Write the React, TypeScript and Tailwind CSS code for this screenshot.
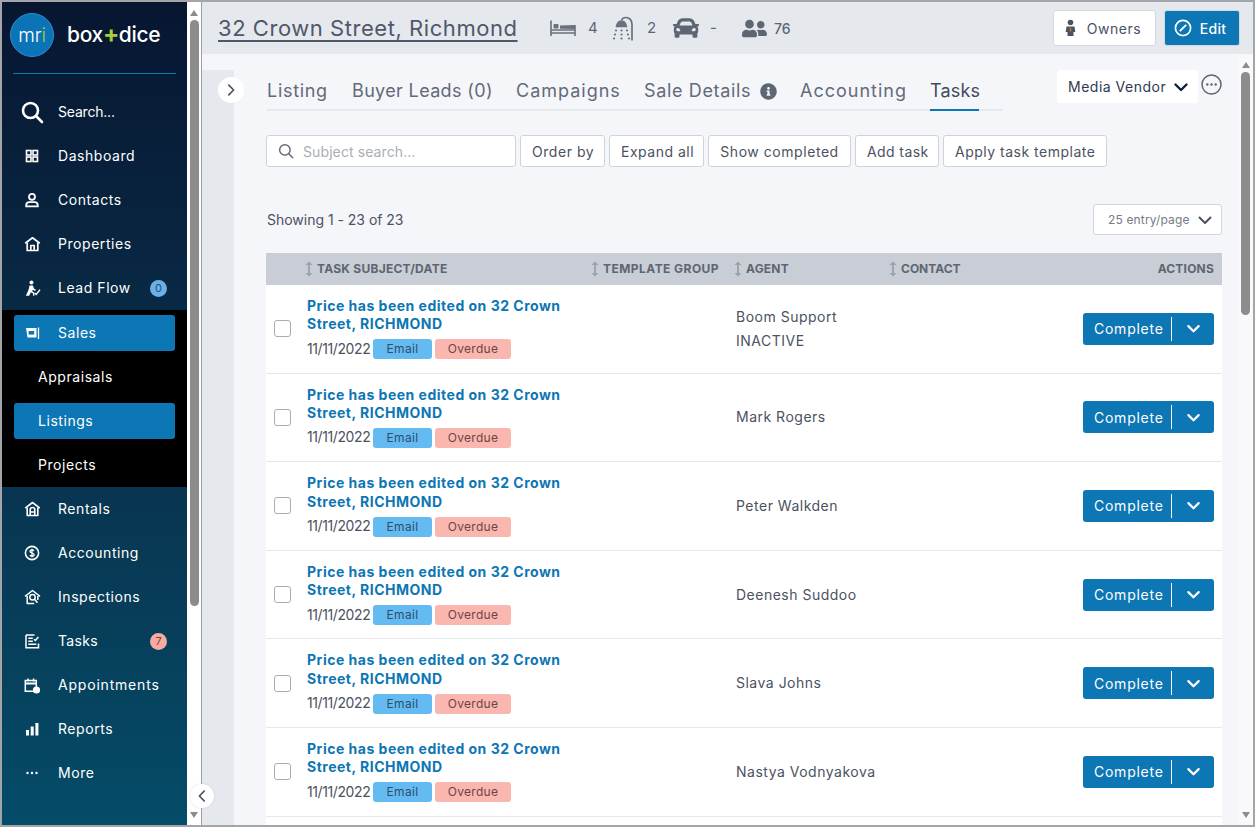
import React from "react";
import { FaCar, FaUserFriends, FaInfoCircle } from "react-icons/fa";

const S = ({ children, w = 20, vb = "0 0 24 24", className = "" }: { children: React.ReactNode; w?: number; vb?: string; className?: string }) => (
  <svg width={w} height={w} viewBox={vb} fill="none" stroke="currentColor" strokeWidth={2} strokeLinecap="round" strokeLinejoin="round" className={className}>{children}</svg>
);

const Chevron = ({ dir = "down", w = 16, sw = 2.4 }: { dir?: "down" | "left" | "right"; w?: number; sw?: number }) => (
  <svg width={w} height={w} viewBox="0 0 16 16" fill="none" stroke="currentColor" strokeWidth={sw} strokeLinecap="round" strokeLinejoin="round">
    {dir === "down" && <path d="M2.5 5.5 8 11l5.5-5.5" />}
    {dir === "left" && <path d="M10.5 2.5 5 8l5.5 5.5" />}
    {dir === "right" && <path d="M5.5 2.5 11 8l-5.5 5.5" />}
  </svg>
);

const icons: Record<string, React.ReactNode> = {
  dashboard: <svg width="14" height="14" viewBox="0 0 14 14" fill="none" stroke="currentColor" strokeWidth="1.6"><rect x="1.5" y="1.5" width="4.5" height="4.5" /><rect x="8" y="1.5" width="4.5" height="4.5" /><rect x="1.5" y="8" width="4.5" height="4.5" /><rect x="8" y="8" width="4.5" height="4.5" /></svg>,
  contacts: <svg width="16" height="16" viewBox="0 0 16 16" fill="none" stroke="currentColor" strokeWidth="1.8"><circle cx="8" cy="4.8" r="3" /><path d="M2.2 14.4v-1c0-2 1.6-3.2 3.3-3.2h5c1.7 0 3.3 1.2 3.3 3.2v1z" /></svg>,
  properties: <svg width="17" height="16" viewBox="0 0 17 16" fill="none" stroke="currentColor" strokeWidth="1.7" strokeLinejoin="round"><path d="M1.2 7.2 8.5 1.8l7.3 5.4" /><path d="M3.2 6.5v8h10.6v-8" /><path d="M6.8 14.5V9.5h3.4v5" /></svg>,
  lead: <svg width="17" height="17" viewBox="0 0 17 17" fill="currentColor"><circle cx="7.5" cy="2.6" r="2" /><path d="M5.5 5.4h3.4l1.2 3.4 1.8.8-.6 1.3-2.6-1.1-.4 1.4 2 1.6v3H9v-2.2l-2.2-1.4-1.6 3.6H1.8l2.6-5.6z" /><path d="m10.5 13 1.6 1.4L16 9.8" fill="none" stroke="currentColor" strokeWidth="1.4" /></svg>,
  sales: <svg width="15" height="14" viewBox="0 0 15 14" fill="none"><path d="M1 2h10.5v9.5H2.5L1 2z" fill="currentColor" /><rect x="3.6" y="5" width="5.6" height="3.6" fill="#0d76b4" /><path d="M13.5 1.5V13" stroke="currentColor" strokeWidth="1.3" /></svg>,
  rentals: <svg width="17" height="16" viewBox="0 0 17 16" fill="none" stroke="currentColor" strokeWidth="1.6" strokeLinejoin="round"><path d="M1.2 7.2 8.5 1.5l7.3 5.7" /><path d="M3.2 6.5v8h10.6v-8" /><path d="M6.2 14.5V8.8a2.3 2.3 0 0 1 4.6 0v5.7M6.2 11h4.6" /></svg>,
  accounting: <svg width="16" height="16" viewBox="0 0 16 16" fill="none" stroke="currentColor" strokeWidth="1.6"><circle cx="8" cy="8" r="6.6" /><path d="M10 5.8C9.5 5 8.8 4.8 8 4.8c-1.2 0-2 .6-2 1.5 0 2.2 4.1 1.2 4.1 3.4 0 .9-.9 1.5-2.1 1.5-.9 0-1.7-.3-2.1-1.1M8 3.8v8.4" strokeWidth="1.3" /></svg>,
  inspections: <svg width="17" height="16" viewBox="0 0 17 16" fill="none" stroke="currentColor" strokeWidth="1.5" strokeLinejoin="round"><path d="M1 7.4 8.5 1.5 16 7.4" /><path d="M3.2 7v7.5h7M13.8 7v4" /><circle cx="8.5" cy="8.3" r="2.7" /><path d="m10.5 10.3 3 3.4" /></svg>,
  tasks: <svg width="15" height="15" viewBox="0 0 15 15" fill="none" stroke="currentColor" strokeWidth="1.5"><path d="M1 1h8.5M1 1v12.8h12.5V9.5" /><path d="M3.3 4.3h4.5M3.3 7.2h4.5M3.3 10.2h8" /><path d="m9 5.2 1.4 1.3 3-3.4" /></svg>,
  appointments: <svg width="17" height="17" viewBox="0 0 17 17" fill="none"><path d="M1.3 3.5h11v10.7h-11z" stroke="currentColor" strokeWidth="1.5" /><path d="M1.3 6.5h11" stroke="currentColor" strokeWidth="2" /><path d="M4 1.5v3M9.6 1.5v3" stroke="currentColor" strokeWidth="1.5" /><circle cx="12.5" cy="13" r="3.6" fill="currentColor" /></svg>,
  reports: <svg width="14" height="14" viewBox="0 0 14 14" fill="currentColor"><rect x="1" y="8" width="3" height="5.5" /><rect x="5.7" y="4.5" width="3" height="9" /><rect x="10.4" y="1" width="3" height="12.5" /></svg>,
  more: <svg width="14" height="14" viewBox="0 0 14 14" fill="currentColor"><circle cx="2.5" cy="7" r="1.2" /><circle cx="7" cy="7" r="1.2" /><circle cx="11.5" cy="7" r="1.2" /></svg>,
};

const NavItem = ({ icon, label, tracking, badge, badgeClass }: { icon: React.ReactNode; label: string; tracking: string; badge?: string; badgeClass?: string }) => (
  <div className="h-11 flex items-center text-white text-[14px] relative">
    <div className="w-[56px] flex justify-center pl-[4px]">{icon}</div>
    <span className={`${tracking} mb-[2px]`}>{label}</span>
    {badge && <span className={`ml-auto mr-[20px] w-[17px] h-[17px] rounded-full flex items-center justify-center text-[11px] ${badgeClass}`}>{badge}</span>}
  </div>
);

const Sort = () => (
  <svg width="8" height="16" viewBox="0 0 8 16" className="shrink-0 text-[#9aa1ad]" fill="currentColor">
    <path d="M4 0.5 7.5 4h-2.6v8h2.6L4 15.5.5 12h2.6V4H.5z" />
  </svg>
);

const Btn = ({ children, cls = "" }: { children: React.ReactNode; cls?: string }) => (
  <button className={`h-8 px-[11px] bg-white border border-[#cfd3da] rounded-[3px] text-[14px] text-[#4b5261] whitespace-nowrap ${cls}`}>{children}</button>
);

const Scroll = ({ w, thumbTop, thumbH, thumbW, bg }: { w: string; thumbTop: string; thumbH: string; thumbW: string; bg: string }) => (
  <div className={`${w} ${bg} shrink-0 h-full flex flex-col items-center`}>
    <div className={`${thumbTop} flex items-end justify-center`}>
      <div className="w-0 h-0 border-l-[4.5px] border-r-[4.5px] border-b-[6px] border-l-transparent border-r-transparent border-b-[#8c8c8c] mb-[4px]" />
    </div>
    <div className={`${thumbW} ${thumbH} bg-[#8c8c8c] rounded-full`} />
    <div className="flex-1 flex items-end pb-[7px]">
      <div className="w-0 h-0 border-l-[4.5px] border-r-[4.5px] border-t-[6px] border-l-transparent border-r-transparent border-t-[#8c8c8c]" />
    </div>
  </div>
);

const rows: { agent: string; extra?: string }[] = [
  { agent: "Boom Support", extra: "INACTIVE" },
  { agent: "Mark Rogers" },
  { agent: "Peter Walkden" },
  { agent: "Deenesh Suddoo" },
  { agent: "Slava Johns" },
  { agent: "Nastya Vodnyakova" },
];

const grid = "grid grid-cols-[36px_288px_143px_155px_180px_1fr]";

export default function App() {
  return (
    <div className="w-[1255px] h-[827px] overflow-hidden bg-[#a3a5a8] pt-[2px] pb-[2px] pl-[2px] pr-[2px] flex font-['Inter','Liberation_Sans',sans-serif]">
      {/* Sidebar */}
      <aside className="w-[185px] shrink-0 h-full bg-gradient-to-b from-[#071631] to-[#044c68] flex flex-col">
        <div className="h-[72px] mx-[11px] border-b border-[#0d76b4] flex items-start pt-[11px] shrink-0">
          <div className="w-11 h-11 rounded-full bg-[#0b74b6] border border-[#2a8fd0] -ml-[3px] flex items-center justify-center text-white text-[19px] font-light leading-none tracking-[-0.2px] shrink-0">
            m<span>r</span><span className="text-[#a6cf38]">i</span>
          </div>
          <div className="ml-[13px] mt-[9px] text-white text-[21px] leading-[26px] font-medium tracking-[-0.35px] whitespace-nowrap">
            box<span className="text-[#a6cf38] font-bold text-[24px] leading-[20px]">+</span>dice
          </div>
        </div>
        <div className="pt-[16px]">
          <NavItem tracking="tracking-[-0.2px]" label="Search..." icon={<S w={24}><circle cx="10.5" cy="10.5" r="7.5" strokeWidth="2.6" /><path d="m16 16 6 6" strokeWidth="2.6" /></S>} />
          <NavItem tracking="tracking-[0.55px]" label="Dashboard" icon={icons.dashboard} />
          <NavItem tracking="tracking-[0.55px]" label="Contacts" icon={icons.contacts} />
          <NavItem tracking="tracking-[0.55px]" label="Properties" icon={icons.properties} />
          <NavItem tracking="tracking-[0.55px]" label="Lead Flow" icon={icons.lead} badge="0" badgeClass="bg-[#69b1e8] text-[#27506f]" />
        </div>
        <div className="bg-black h-[177px] pt-px shrink-0 text-white text-[14px]">
          <div className="h-11 py-[4px] px-[12px]">
            <div className="h-9 rounded-[3px] bg-[#0d76b4] flex items-center">
              <div className="w-[44px] pr-[8px] flex justify-center">{icons.sales}</div>
              <span className="tracking-[0.55px] mb-[2px]">Sales</span>
            </div>
          </div>
          <div className="h-11 flex items-center pl-[36px]"><span className="tracking-[0.55px] mb-[2px]">Appraisals</span></div>
          <div className="h-11 py-[4px] px-[12px]">
            <div className="h-9 rounded-[3px] bg-[#0d76b4] flex items-center pl-[24px]"><span className="tracking-[0.55px] mb-[2px]">Listings</span></div>
          </div>
          <div className="h-11 flex items-center pl-[36px]"><span className="tracking-[0.55px] mb-[2px]">Projects</span></div>
        </div>
        <div>
          <NavItem tracking="tracking-[0.55px]" label="Rentals" icon={icons.rentals} />
          <NavItem tracking="tracking-[0.55px]" label="Accounting" icon={icons.accounting} />
          <NavItem tracking="tracking-[0.55px]" label="Inspections" icon={icons.inspections} />
          <NavItem tracking="tracking-[0.3px]" label="Tasks" icon={icons.tasks} badge="7" badgeClass="bg-[#f7aba3] text-[#7a3e3a]" />
          <NavItem tracking="tracking-[0.8px]" label="Appointments" icon={icons.appointments} />
          <NavItem tracking="tracking-[0.55px]" label="Reports" icon={icons.reports} />
          <NavItem tracking="tracking-[0.55px]" label="More" icon={icons.more} />
        </div>
      </aside>

      {/* Sidebar gutter */}
      <div className="w-[14px] shrink-0 h-full bg-white relative">
        <Scroll w="w-[14px]" bg="bg-white" thumbTop="h-[18px]" thumbH="h-[586px]" thumbW="w-[9px]" />
      </div>
      <div className="w-px shrink-0 h-full bg-[#9b9ea3]" />

      {/* Main */}
      <main className="flex-1 min-w-0 h-full flex flex-col bg-[#f5f6fa] relative">
        <header className="h-[52px] shrink-0 bg-[#e5e8ed] flex items-center pl-[16px] pr-[13px] text-[#5f6673]">
          <h1 className="text-[22px] underline underline-offset-[4px] decoration-[1.5px] tracking-[0.55px] text-[#50576a] whitespace-nowrap w-[300px]">32 Crown Street, Richmond</h1>
          <svg width="26" height="18" viewBox="0 0 26 18" className="ml-[32px] text-[#6a707c]" fill="none" stroke="currentColor" strokeWidth="1.6">
            <path d="M1 1.5V17M25 6v11M1 14h24M1 11h24" />
            <rect x="3.5" y="5" width="5" height="4.5" rx="1" fill="currentColor" stroke="none" />
            <path d="M10 9.8V6.5l15-.5v4" fill="currentColor" stroke="none" />
          </svg>
          <span className="ml-[12px] w-[12px] text-[15px]">4</span>
          <svg width="23" height="25" viewBox="0 0 23 25" className="ml-[11px] text-[#6a707c]" fill="currentColor">
            <path d="M21 24.5V8.5C21 4 18.5 1.5 15 1.5c-2.2 0-3.8 1-4.5 2.8" fill="none" stroke="currentColor" strokeWidth="1.7" />
            <path d="M10.5 4.2c-3.2 0-5.5 2.8-5.8 7h11.6c-.3-4.2-2.6-7-5.8-7z" />
            <circle cx="5" cy="14.5" r="1.1" /><circle cx="10.5" cy="14.5" r="1.1" /><circle cx="16" cy="14.5" r="1.1" />
            <circle cx="4" cy="18.5" r="1.1" /><circle cx="10.5" cy="18.5" r="1.1" /><circle cx="17" cy="18.5" r="1.1" />
            <circle cx="3" cy="22.5" r="1.1" /><circle cx="10.5" cy="22.5" r="1.1" /><circle cx="18" cy="22.5" r="1.1" />
          </svg>
          <span className="ml-[13px] w-[12px] text-[15px]">2</span>
          <FaCar size={26} className="ml-[14px] text-[#5f6673]" />
          <span className="ml-[11px] w-[8px] text-[15px]">-</span>
          <FaUserFriends size={25} className="ml-[24px] text-[#5f6673]" />
          <span className="ml-[7px] mt-[1px] text-[14px] font-medium">76</span>
          <div className="ml-auto flex items-center gap-[8px]">
            <button className="h-[36px] w-[103px] bg-white border border-[#d5d8de] rounded-[3px] flex items-center justify-center gap-[11px] text-[14px] tracking-[0.55px] text-[#4b5261]">
              <svg width="11" height="18" viewBox="0 0 11 18" fill="#4b5261" className="-ml-[3px]"><circle cx="5.5" cy="3.5" r="2.8" /><path d="M1.5 7.4h8l.8 5.6H8.5v4h-6v-4H.7z" /><path d="M5.5 7.4 6.5 11l-1 2-1-2z" fill="#c77a2e" /></svg>
              Owners
            </button>
            <button className="h-[36px] w-[76px] bg-[#0d76b4] border border-[#d5d8de] rounded-[3px] flex items-center justify-center gap-[8px] text-[14px] tracking-[0.3px] font-medium text-white">
              <svg width="18" height="18" viewBox="0 0 18 18" fill="none" stroke="white" strokeWidth="1.7" className="-ml-[4px]"><circle cx="9" cy="9" r="7.6" /><path d="m5.8 12.2 6.4-6.4" strokeWidth="1.9" /></svg>
              Edit
            </button>
          </div>
        </header>

        <div className="flex-1 min-h-0 flex">
          <div className="w-[32px] shrink-0 mt-[16px] bg-[#e5e8ed]" />
          <div className="flex-1 min-w-0 pl-[32px] pr-[16px] overflow-hidden">
            <div className="relative h-[57px] w-[956px]">
              <div className="absolute left-[1px] top-[22px] w-[736px] h-[35px] border-b-2 border-[#e5e8ed] flex items-start text-[18px] text-[#636a78] whitespace-nowrap">
                <span className="w-[85px] pt-[2px] leading-[26px] tracking-[0.7px]">Listing</span>
                <span className="w-[164px] pt-[2px] leading-[26px] tracking-[0.35px]">Buyer Leads (0)</span>
                <span className="w-[128px] pt-[2px] leading-[26px] tracking-[1px]">Campaigns</span>
                <span className="w-[156px] pt-[2px] leading-[26px] tracking-[0.65px] flex items-center">Sale Details<FaInfoCircle size={17} className="ml-[9px] text-[#5f6673]" /></span>
                <span className="w-[130px] pt-[2px] leading-[26px] tracking-[1px]">Accounting</span>
                <span className="relative h-[35px] w-[49px] pt-[2px] leading-[26px] tracking-[0.2px] text-[#434a5a] border-b-2 border-[#0d76b4]">Tasks</span>
              </div>
              <div className="absolute left-[791px] top-[16px] h-[33px] w-[141px] bg-white rounded-[3px] flex items-center pl-[11px] text-[14px] tracking-[0.5px] text-[#2f3a4f] whitespace-nowrap">
                Media Vendor
                <span className="absolute right-[9px] top-[9px] text-[#0f1f3a]"><Chevron /></span>
              </div>
              <svg className="absolute left-[935px] top-[20px] text-[#5f6673]" width="21" height="21" viewBox="0 0 21 21" fill="none" stroke="currentColor" strokeWidth="1.5"><circle cx="10.5" cy="10.5" r="9.5" /><circle cx="6.3" cy="10.5" r="1.2" fill="currentColor" stroke="none" /><circle cx="10.5" cy="10.5" r="1.2" fill="currentColor" stroke="none" /><circle cx="14.7" cy="10.5" r="1.2" fill="currentColor" stroke="none" /></svg>
            </div>

            <div className="mt-[24px] flex gap-[4px]">
              <div className="h-8 w-[250px] bg-white border border-[#cfd3da] rounded-[3px] flex items-center pl-[10px] gap-[8px] text-[14px] text-[#a9aeb8] tracking-[0.1px]">
                <S w={18} className="text-[#666d79]"><circle cx="10.5" cy="10.5" r="7" /><path d="m16 16 5 5" /></S>
                Subject search...
              </div>
              <Btn cls="tracking-[0.55px] w-[85px]">Order by</Btn>
              <Btn cls="tracking-[0.5px] w-[95px]">Expand all</Btn>
              <Btn cls="tracking-[0.55px] w-[143px]">Show completed</Btn>
              <Btn cls="tracking-[0.4px] w-[84px]">Add task</Btn>
              <Btn cls="tracking-[0.5px] w-[164px]">Apply task template</Btn>
            </div>

            <div className="mt-[37px] h-[31px] flex items-center justify-between">
              <span className="pl-px text-[14px] tracking-[-0.02px] text-[#4b5261]">Showing 1 - 23 of 23</span>
              <div className="h-[31px] w-[129px] bg-white border border-[#d2d5db] rounded-[3px] flex items-center pl-[14px] text-[12px] text-[#757b87] tracking-[0.15px] relative whitespace-nowrap">
                25 entry/page
                <span className="absolute right-[8px] top-[7px] text-[#4b5261]"><Chevron sw={2} /></span>
              </div>
            </div>

            <div className="mt-[18px]">
              <div className={`${grid} h-[32px] bg-[#c9ced6] items-center text-[12px] font-bold text-[#5f6570] whitespace-nowrap`}>
                <div />
                <div className="pl-[3px] flex items-center gap-[4px] tracking-[0.25px]"><Sort />TASK SUBJECT/DATE</div>
                <div className="pl-[1px] flex items-center gap-[4px] tracking-[0.45px]"><Sort />TEMPLATE GROUP</div>
                <div className="pl-[1px] flex items-center gap-[4px] tracking-[0.2px]"><Sort />AGENT</div>
                <div className="pl-[1px] flex items-center gap-[4px]"><Sort />CONTACT</div>
                <div className="text-right pr-[8px] tracking-[0.2px]">ACTIONS</div>
              </div>
              {rows.map((r, i) => (
                <div key={i} className={`${grid} h-[88.6px] bg-white border-b border-[#e5e8ed]`}>
                  <div className="flex items-center pl-[8px]">
                    <div className="w-[17px] h-[17px] rounded-[3px] border border-[#a7acb5] bg-white" />
                  </div>
                  <div className="pl-[5px] pt-[12px]">
                    <div className="text-[14px] leading-[18.4px] font-bold text-[#0d76b4] tracking-[0.5px] w-[270px]">Price has been edited on 32 Crown Street, RICHMOND</div>
                    <div className="mt-[4px] flex items-center text-[14px] text-[#4b5261]">
                      <span className="w-[66px] tracking-[-0.4px] mb-[2px]">11/11/2022</span>
                      <span className="w-[59px] h-5 rounded-[3px] bg-[#63bbf2] text-[12px] tracking-[0.3px] text-[#2f4e68] flex items-center justify-center">Email</span>
                      <span className="ml-[3px] w-[76px] h-5 rounded-[3px] bg-[#fab7b0] text-[12px] tracking-[0.3px] text-[#6d4444] flex items-center justify-center">Overdue</span>
                    </div>
                  </div>
                  <div />
                  <div className="pl-[3px] flex flex-col justify-center text-[14px] text-[#4b5261] tracking-[0.5px] gap-[6px] whitespace-nowrap">
                    <span className="leading-[18px]">{r.agent}</span>
                    {r.extra && <span className="leading-[18px]">{r.extra}</span>}
                  </div>
                  <div className="col-span-2 flex items-center justify-end pr-[8px]">
                    <div className="w-[131px] h-8 rounded-[3px] bg-[#0d76b4] flex items-center text-white text-[14px] tracking-[0.75px]">
                      <span className="pl-[11px] w-[88px]">Complete</span>
                      <span className="w-px h-6 bg-white" />
                      <span className="flex-1 flex justify-center"><Chevron w={15} /></span>
                    </div>
                  </div>
                </div>
              ))}
              <div className="h-[12px] bg-white" />
            </div>
          </div>
          <Scroll w="w-[15px]" bg="bg-[#f9f9fb]" thumbTop="h-[18px]" thumbH="h-[243px]" thumbW="w-[9px]" />
        </div>

        {/* overlays */}
        <button className="absolute left-[16px] top-[75px] w-[26px] h-[26px] rounded-full bg-white flex items-center justify-center text-[#4f5663]"><Chevron dir="right" w={14} sw={2} /></button>
        <button className="absolute -left-[12px] top-[782px] w-[24px] h-[24px] rounded-full bg-white shadow-[0_0_2px_rgba(0,0,0,0.15)] flex items-center justify-center text-[#4f5663]"><Chevron dir="left" w={14} sw={2} /></button>
      </main>
    </div>
  );
}
